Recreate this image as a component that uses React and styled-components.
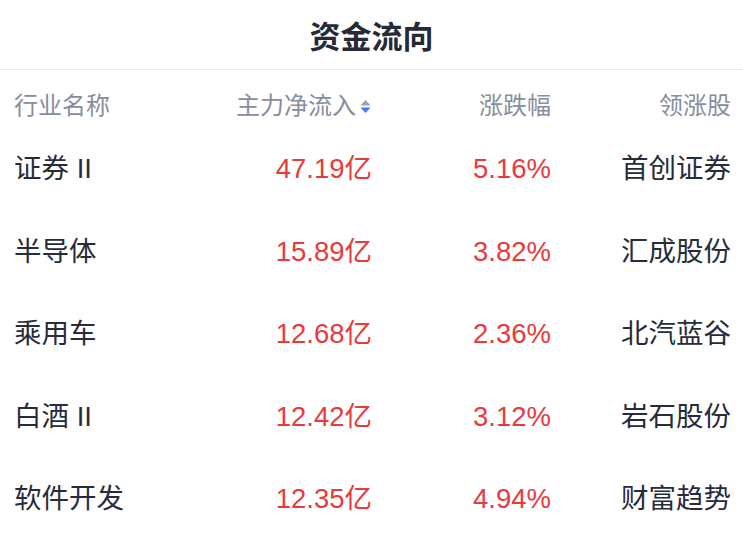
import React from "react";
import styled, { createGlobalStyle } from "styled-components";

const GlobalStyle = createGlobalStyle`
  html, body {
    margin: 0;
    padding: 0;
    background: #ffffff;
  }
  body {
    font-family: "Liberation Sans", "Noto Sans CJK SC", sans-serif;
  }
`;

const Page = styled.div`
  width: 743px;
  background: #fff;
`;

const TitleBar = styled.div`
  height: 69px;
  display: flex;
  align-items: center;
  justify-content: center;
  border-bottom: 1px solid #e8e9ec;
  font-size: 31px;
  font-weight: 600;
  color: #262a36;
`;

const Grid = styled.div`
  display: grid;
  grid-template-columns: 178px 180px 179px 180px;
  padding: 0 12px 0 14px;
`;

const HeaderCell = styled.div`
  height: 58px;
  padding-top: 14px;
  box-sizing: border-box;
  display: flex;
  align-items: center;
  justify-content: ${({ $left }) => ($left ? "flex-start" : "flex-end")};
  font-size: 24px;
  line-height: 32px;
  color: #878d9e;
`;

const Cell = styled.div`
  height: 82.5px;
  display: flex;
  align-items: center;
  justify-content: ${({ $left }) => ($left ? "flex-start" : "flex-end")};
  font-size: 27.5px;
  line-height: 36px;
  color: ${({ $red }) => ($red ? "#e8393b" : "#272c3a")};
`;

const SortIcon = styled.svg`
  margin-left: 4px;
  margin-right: 1px;
  flex: none;
`;

const rows = [
  { name: "证券 II", flow: "47.19亿", pct: "5.16%", lead: "首创证券" },
  { name: "半导体", flow: "15.89亿", pct: "3.82%", lead: "汇成股份" },
  { name: "乘用车", flow: "12.68亿", pct: "2.36%", lead: "北汽蓝谷" },
  { name: "白酒 II", flow: "12.42亿", pct: "3.12%", lead: "岩石股份" },
  { name: "软件开发", flow: "12.35亿", pct: "4.94%", lead: "财富趋势" }
];

export default function App() {
  return (
    <Page>
      <GlobalStyle />
      <TitleBar>资金流向</TitleBar>
      <Grid>
        <HeaderCell $left>行业名称</HeaderCell>
        <HeaderCell>
          主力净流入
          <SortIcon width="11" height="15" viewBox="0 0 11 15">
            <path d="M5.5 1 L10.5 6.5 L0.5 6.5 Z" fill="#9aa1b0" />
            <path d="M0.5 8.5 L10.5 8.5 L5.5 14 Z" fill="#3a7cf3" />
          </SortIcon>
        </HeaderCell>
        <HeaderCell>涨跌幅</HeaderCell>
        <HeaderCell>领涨股</HeaderCell>
        {rows.map((r) => (
          <React.Fragment key={r.name}>
            <Cell $left>{r.name}</Cell>
            <Cell $red>{r.flow}</Cell>
            <Cell $red>{r.pct}</Cell>
            <Cell>{r.lead}</Cell>
          </React.Fragment>
        ))}
      </Grid>
    </Page>
  );
}
